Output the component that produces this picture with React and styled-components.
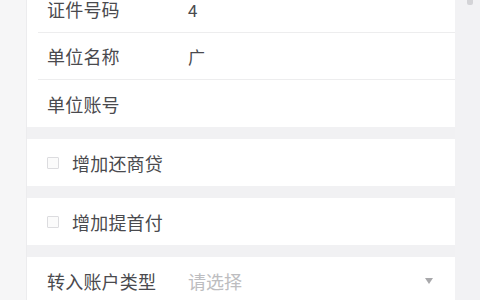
import React from 'react';
import styled, { createGlobalStyle } from 'styled-components';

const GlobalStyle = createGlobalStyle`
  html, body {
    margin: 0;
    padding: 0;
    background: #f6f6f7;
    overflow: hidden;
  }
  body {
    font-family: "Noto Sans CJK SC", "Noto Sans", sans-serif;
  }
`;

export default function App() {
  return (
    <>
      <GlobalStyle />
      <Page>
        <SideGutter />
        <Card>
          <Group>
            <FieldRow $divider>
              <Label>证件号码</Label>
              <Value>4</Value>
            </FieldRow>
            <FieldRow $divider>
              <Label>单位名称</Label>
              <Value>广</Value>
            </FieldRow>
            <FieldRow>
              <Label>单位账号</Label>
            </FieldRow>
          </Group>
          <Group>
            <CheckRow>
              <CheckBox />
              <CheckText>增加还商贷</CheckText>
            </CheckRow>
          </Group>
          <Group>
            <CheckRow>
              <CheckBox />
              <CheckText>增加提首付</CheckText>
            </CheckRow>
          </Group>
          <Group>
            <FieldRow>
              <Label>转入账户类型</Label>
              <Placeholder>请选择</Placeholder>
              <Arrow />
            </FieldRow>
          </Group>
        </Card>
        <ScrollTrack>
          <ScrollThumb />
        </ScrollTrack>
      </Page>
    </>
  );
}

const Page = styled.div`
  display: flex;
  width: 480px;
  height: 300px;
  overflow: hidden;
  background: #f6f6f7;
`;

const SideGutter = styled.div`
  width: 26px;
  flex-shrink: 0;
  border-right: 1px solid #ececee;
`;

const Card = styled.div`
  flex: 1;
  display: flex;
  flex-direction: column;
  gap: 12px;
  background: #f1f1f3;
  margin-top: -14px;
`;

const Group = styled.div`
  background: #ffffff;
  display: flex;
  flex-direction: column;
  padding-left: 11px;
`;

const FieldRow = styled.div`
  display: flex;
  align-items: center;
  height: 47px;
  box-sizing: border-box;
  padding-left: 9px;
  padding-right: 22px;
  border-bottom: ${(p) => (p.$divider ? '1px solid #ededee' : 'none')};
`;

const Label = styled.span`
  width: 141px;
  flex-shrink: 0;
  font-size: 18px;
  color: #4a4a4e;
  letter-spacing: 0.2px;
`;

const Value = styled.span`
  font-size: 17px;
  color: #4a4a4e;
`;

const Placeholder = styled.span`
  flex: 1;
  font-size: 18px;
  color: #bdbdc0;
`;

const Arrow = styled.span`
  width: 0;
  height: 0;
  border-left: 4px solid transparent;
  border-right: 4px solid transparent;
  border-top: 6px solid #a8a8ab;
`;

const CheckRow = styled.div`
  display: flex;
  align-items: center;
  height: 47px;
  padding-left: 9px;
`;

const CheckBox = styled.span`
  width: 10px;
  height: 10px;
  border: 1px solid #dcdcdf;
  border-radius: 1px;
  background: #fbfbfb;
  margin-right: 13px;
`;

const CheckText = styled.span`
  font-size: 18px;
  color: #4a4a4e;
  letter-spacing: 0.2px;
`;

const ScrollTrack = styled.div`
  width: 25px;
  flex-shrink: 0;
  background: #f2f2f4;
  display: flex;
  justify-content: center;
`;

const ScrollThumb = styled.div`
  width: 6px;
  height: 5px;
  margin-left: 4px;
  border-radius: 0 0 2px 2px;
  background: #d4d4d7;
`;
